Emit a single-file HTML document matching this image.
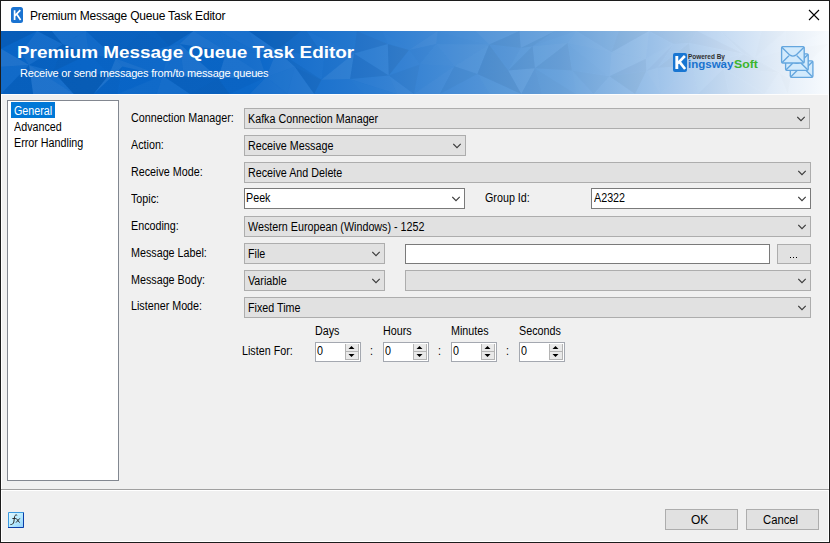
<!DOCTYPE html>
<html><head><meta charset="utf-8">
<style>
html,body{margin:0;padding:0;}
body{width:830px;height:543px;position:relative;overflow:hidden;background:#f0f0f0;font-family:"Liberation Sans",sans-serif;color:#000;}
.a{position:absolute;}
.t{position:absolute;white-space:nowrap;line-height:1;font-size:12px;transform:scaleX(0.895);transform-origin:0 0;}
.cb{position:absolute;box-sizing:border-box;border:1px solid #adadad;background:#e1e1e1;height:21px;}
.cbw{position:absolute;box-sizing:border-box;border:1px solid #7a7a7a;background:#fff;height:21px;}
.btn{position:absolute;box-sizing:border-box;border:1px solid #adadad;background:#e1e1e1;}
.nud{position:absolute;box-sizing:border-box;border:1px solid #a4a8b0;background:#fff;width:46px;height:20px;}
</style></head><body>
<div class="a" style="left:0;top:0;width:830px;height:543px;box-sizing:border-box;border:1px solid #1c1c1c;"></div>
<div class="a" style="left:1px;top:94px;width:1px;height:448px;background:#fff;"></div>
<div class="a" style="left:828px;top:94px;width:1px;height:448px;background:#fff;"></div>
<div class="a" style="left:1px;top:541px;width:828px;height:1px;background:#fff;"></div>
<div class="a" style="left:1px;top:1px;width:828px;height:30px;background:#fff;"></div>
<div class="a" style="left:11px;top:7px;width:12px;height:16px;background:#1a73d1;border-radius:2.5px;"></div>
<svg class="a" style="left:11px;top:7px;" width="12" height="16" viewBox="0 0 12 16"><path d="M3.6 3.2V12.9M4 8.6L9.3 3.2M5.6 7L9.6 12.9" stroke="#fff" stroke-width="1.7" fill="none"/></svg>
<div class="a" style="left:30px;top:10px;white-space:nowrap;line-height:1;font-size:12px;letter-spacing:-0.2px;">Premium Message Queue Task Editor</div>
<svg class="a" style="left:808px;top:9px;" width="12" height="12" viewBox="0 0 12 12"><path d="M1 1L11 11M11 1L1 11" stroke="#000" stroke-width="1.1"/></svg>
<div class="a" style="left:1px;top:31px;width:828px;height:63px;background:linear-gradient(90deg,#0864c6 0%,#0b67c9 30%,#2a7bd1 45%,#5596d8 60%,#6aa3dc 67.5%,#a0c4ea 79.5%,#c9ddf3 88%,#e3edf8 94%,#f8fbfe 100%);"></div>
<svg class="a" style="left:1px;top:31px;" width="828" height="63" viewBox="0 0 828 63"><path d="M0.0 0.0L36.1 0.0L0.0 17.8Z" fill="#000" fill-opacity="0.070"/><path d="M36.1 0.0L19.9 21.6L0.0 17.8Z" fill="#fff" fill-opacity="0.008"/><path d="M0.0 17.8L19.9 21.6L28.1 34.0Z" fill="#fff" fill-opacity="0.006"/><path d="M0.0 17.8L28.1 34.0L0.0 35.7Z" fill="#fff" fill-opacity="0.095"/><path d="M0.0 35.7L28.1 34.0L0.0 63.0Z" fill="#fff" fill-opacity="0.039"/><path d="M28.1 34.0L32.1 63.0L0.0 63.0Z" fill="#000" fill-opacity="0.047"/><path d="M36.1 0.0L50.7 0.0L61.8 13.3Z" fill="#000" fill-opacity="0.064"/><path d="M36.1 0.0L61.8 13.3L19.9 21.6Z" fill="#fff" fill-opacity="0.053"/><path d="M19.9 21.6L61.8 13.3L28.1 34.0Z" fill="#fff" fill-opacity="0.054"/><path d="M61.8 13.3L52.2 40.6L28.1 34.0Z" fill="#000" fill-opacity="0.033"/><path d="M28.1 34.0L52.2 40.6L72.8 63.0Z" fill="#fff" fill-opacity="0.060"/><path d="M28.1 34.0L72.8 63.0L32.1 63.0Z" fill="#fff" fill-opacity="0.093"/><path d="M50.7 0.0L85.0 0.0L61.8 13.3Z" fill="#fff" fill-opacity="0.058"/><path d="M85.0 0.0L87.8 23.3L61.8 13.3Z" fill="#fff" fill-opacity="0.059"/><path d="M61.8 13.3L87.8 23.3L52.2 40.6Z" fill="#000" fill-opacity="0.051"/><path d="M87.8 23.3L108.1 43.4L52.2 40.6Z" fill="#fff" fill-opacity="0.003"/><path d="M52.2 40.6L108.1 43.4L92.6 63.0Z" fill="#000" fill-opacity="0.087"/><path d="M52.2 40.6L92.6 63.0L72.8 63.0Z" fill="#000" fill-opacity="0.088"/><path d="M85.0 0.0L140.7 0.0L114.7 27.5Z" fill="#000" fill-opacity="0.043"/><path d="M85.0 0.0L114.7 27.5L87.8 23.3Z" fill="#fff" fill-opacity="0.035"/><path d="M87.8 23.3L114.7 27.5L108.1 43.4Z" fill="#000" fill-opacity="0.010"/><path d="M114.7 27.5L121.5 35.6L108.1 43.4Z" fill="#fff" fill-opacity="0.079"/><path d="M108.1 43.4L121.5 35.6L92.6 63.0Z" fill="#fff" fill-opacity="0.082"/><path d="M121.5 35.6L116.7 63.0L92.6 63.0Z" fill="#000" fill-opacity="0.024"/><path d="M140.7 0.0L153.9 0.0L168.1 15.3Z" fill="#000" fill-opacity="0.047"/><path d="M140.7 0.0L168.1 15.3L114.7 27.5Z" fill="#000" fill-opacity="0.053"/><path d="M114.7 27.5L168.1 15.3L161.5 44.5Z" fill="#fff" fill-opacity="0.022"/><path d="M114.7 27.5L161.5 44.5L121.5 35.6Z" fill="#fff" fill-opacity="0.071"/><path d="M121.5 35.6L161.5 44.5L116.7 63.0Z" fill="#000" fill-opacity="0.004"/><path d="M161.5 44.5L155.7 63.0L116.7 63.0Z" fill="#fff" fill-opacity="0.027"/><path d="M153.9 0.0L192.4 0.0L168.1 15.3Z" fill="#000" fill-opacity="0.070"/><path d="M192.4 0.0L178.8 13.1L168.1 15.3Z" fill="#fff" fill-opacity="0.027"/><path d="M168.1 15.3L178.8 13.1L161.5 44.5Z" fill="#fff" fill-opacity="0.048"/><path d="M178.8 13.1L182.8 45.2L161.5 44.5Z" fill="#fff" fill-opacity="0.042"/><path d="M161.5 44.5L182.8 45.2L189.0 63.0Z" fill="#000" fill-opacity="0.054"/><path d="M161.5 44.5L189.0 63.0L155.7 63.0Z" fill="#fff" fill-opacity="0.049"/><path d="M192.4 0.0L217.7 0.0L225.3 20.2Z" fill="#fff" fill-opacity="0.049"/><path d="M192.4 0.0L225.3 20.2L178.8 13.1Z" fill="#fff" fill-opacity="0.078"/><path d="M178.8 13.1L225.3 20.2L217.3 47.3Z" fill="#000" fill-opacity="0.016"/><path d="M178.8 13.1L217.3 47.3L182.8 45.2Z" fill="#fff" fill-opacity="0.074"/><path d="M182.8 45.2L217.3 47.3L189.0 63.0Z" fill="#000" fill-opacity="0.054"/><path d="M217.3 47.3L228.5 63.0L189.0 63.0Z" fill="#000" fill-opacity="0.061"/><path d="M217.7 0.0L247.6 0.0L256.9 21.5Z" fill="#fff" fill-opacity="0.063"/><path d="M217.7 0.0L256.9 21.5L225.3 20.2Z" fill="#fff" fill-opacity="0.048"/><path d="M225.3 20.2L256.9 21.5L265.3 46.1Z" fill="#fff" fill-opacity="0.051"/><path d="M225.3 20.2L265.3 46.1L217.3 47.3Z" fill="#fff" fill-opacity="0.076"/><path d="M217.3 47.3L265.3 46.1L228.5 63.0Z" fill="#000" fill-opacity="0.024"/><path d="M265.3 46.1L248.8 63.0L228.5 63.0Z" fill="#fff" fill-opacity="0.008"/><path d="M247.6 0.0L300.1 0.0L275.9 19.5Z" fill="#000" fill-opacity="0.073"/><path d="M247.6 0.0L275.9 19.5L256.9 21.5Z" fill="#fff" fill-opacity="0.072"/><path d="M256.9 21.5L275.9 19.5L265.3 46.1Z" fill="#fff" fill-opacity="0.004"/><path d="M275.9 19.5L293.8 35.7L265.3 46.1Z" fill="#fff" fill-opacity="0.065"/><path d="M265.3 46.1L293.8 35.7L286.3 63.0Z" fill="#fff" fill-opacity="0.055"/><path d="M265.3 46.1L286.3 63.0L248.8 63.0Z" fill="#fff" fill-opacity="0.050"/><path d="M300.1 0.0L305.6 0.0L323.2 25.8Z" fill="#000" fill-opacity="0.036"/><path d="M300.1 0.0L323.2 25.8L275.9 19.5Z" fill="#000" fill-opacity="0.030"/><path d="M275.9 19.5L323.2 25.8L320.5 48.8Z" fill="#fff" fill-opacity="0.012"/><path d="M275.9 19.5L320.5 48.8L293.8 35.7Z" fill="#000" fill-opacity="0.035"/><path d="M293.8 35.7L320.5 48.8L313.2 63.0Z" fill="#000" fill-opacity="0.053"/><path d="M293.8 35.7L313.2 63.0L286.3 63.0Z" fill="#fff" fill-opacity="0.060"/><path d="M305.6 0.0L355.8 0.0L353.0 22.4Z" fill="#000" fill-opacity="0.006"/><path d="M305.6 0.0L353.0 22.4L323.2 25.8Z" fill="#fff" fill-opacity="0.012"/><path d="M323.2 25.8L353.0 22.4L320.5 48.8Z" fill="#000" fill-opacity="0.011"/><path d="M353.0 22.4L349.1 48.1L320.5 48.8Z" fill="#fff" fill-opacity="0.057"/><path d="M320.5 48.8L349.1 48.1L313.2 63.0Z" fill="#fff" fill-opacity="0.004"/><path d="M349.1 48.1L362.8 63.0L313.2 63.0Z" fill="#fff" fill-opacity="0.003"/><path d="M355.8 0.0L381.4 0.0L386.8 13.1Z" fill="#000" fill-opacity="0.008"/><path d="M355.8 0.0L386.8 13.1L353.0 22.4Z" fill="#000" fill-opacity="0.042"/><path d="M353.0 22.4L386.8 13.1L387.8 44.6Z" fill="#fff" fill-opacity="0.039"/><path d="M353.0 22.4L387.8 44.6L349.1 48.1Z" fill="#000" fill-opacity="0.044"/><path d="M349.1 48.1L387.8 44.6L396.0 63.0Z" fill="#fff" fill-opacity="0.029"/><path d="M349.1 48.1L396.0 63.0L362.8 63.0Z" fill="#fff" fill-opacity="0.007"/><path d="M381.4 0.0L423.0 0.0L408.0 18.9Z" fill="#fff" fill-opacity="0.002"/><path d="M381.4 0.0L408.0 18.9L386.8 13.1Z" fill="#fff" fill-opacity="0.007"/><path d="M386.8 13.1L408.0 18.9L387.8 44.6Z" fill="#000" fill-opacity="0.050"/><path d="M408.0 18.9L418.7 33.4L387.8 44.6Z" fill="#fff" fill-opacity="0.007"/><path d="M387.8 44.6L418.7 33.4L412.9 63.0Z" fill="#000" fill-opacity="0.028"/><path d="M387.8 44.6L412.9 63.0L396.0 63.0Z" fill="#fff" fill-opacity="0.034"/><path d="M423.0 0.0L436.6 0.0L408.0 18.9Z" fill="#fff" fill-opacity="0.007"/><path d="M436.6 0.0L435.1 13.1L408.0 18.9Z" fill="#fff" fill-opacity="0.031"/><path d="M408.0 18.9L435.1 13.1L418.7 33.4Z" fill="#000" fill-opacity="0.007"/><path d="M435.1 13.1L453.4 35.3L418.7 33.4Z" fill="#fff" fill-opacity="0.013"/><path d="M418.7 33.4L453.4 35.3L412.9 63.0Z" fill="#fff" fill-opacity="0.001"/><path d="M453.4 35.3L438.8 63.0L412.9 63.0Z" fill="#fff" fill-opacity="0.023"/><path d="M436.6 0.0L474.6 0.0L488.1 13.5Z" fill="#fff" fill-opacity="0.004"/><path d="M436.6 0.0L488.1 13.5L435.1 13.1Z" fill="#000" fill-opacity="0.003"/><path d="M435.1 13.1L488.1 13.5L453.4 35.3Z" fill="#fff" fill-opacity="0.022"/><path d="M488.1 13.5L476.3 42.9L453.4 35.3Z" fill="#fff" fill-opacity="0.041"/><path d="M453.4 35.3L476.3 42.9L438.8 63.0Z" fill="#000" fill-opacity="0.027"/><path d="M476.3 42.9L488.4 63.0L438.8 63.0Z" fill="#fff" fill-opacity="0.007"/><path d="M474.6 0.0L518.5 0.0L488.1 13.5Z" fill="#fff" fill-opacity="0.036"/><path d="M518.5 0.0L519.7 17.0L488.1 13.5Z" fill="#000" fill-opacity="0.037"/><path d="M488.1 13.5L519.7 17.0L507.2 39.5Z" fill="#000" fill-opacity="0.006"/><path d="M488.1 13.5L507.2 39.5L476.3 42.9Z" fill="#000" fill-opacity="0.045"/><path d="M476.3 42.9L507.2 39.5L520.3 63.0Z" fill="#000" fill-opacity="0.044"/><path d="M476.3 42.9L520.3 63.0L488.4 63.0Z" fill="#fff" fill-opacity="0.018"/><path d="M518.5 0.0L554.2 0.0L519.7 17.0Z" fill="#fff" fill-opacity="0.038"/><path d="M554.2 0.0L531.6 15.2L519.7 17.0Z" fill="#000" fill-opacity="0.033"/><path d="M519.7 17.0L531.6 15.2L507.2 39.5Z" fill="#fff" fill-opacity="0.016"/><path d="M531.6 15.2L533.9 37.2L507.2 39.5Z" fill="#000" fill-opacity="0.035"/><path d="M507.2 39.5L533.9 37.2L520.3 63.0Z" fill="#fff" fill-opacity="0.046"/><path d="M533.9 37.2L541.0 63.0L520.3 63.0Z" fill="#000" fill-opacity="0.027"/><path d="M554.2 0.0L575.7 0.0L531.6 15.2Z" fill="#000" fill-opacity="0.009"/><path d="M575.7 0.0L566.6 12.1L531.6 15.2Z" fill="#000" fill-opacity="0.001"/><path d="M531.6 15.2L566.6 12.1L533.9 37.2Z" fill="#fff" fill-opacity="0.031"/><path d="M566.6 12.1L571.0 39.6L533.9 37.2Z" fill="#000" fill-opacity="0.031"/><path d="M533.9 37.2L571.0 39.6L575.1 63.0Z" fill="#fff" fill-opacity="0.001"/><path d="M533.9 37.2L575.1 63.0L541.0 63.0Z" fill="#000" fill-opacity="0.015"/><path d="M575.7 0.0L617.8 0.0L610.4 21.3Z" fill="#000" fill-opacity="0.014"/><path d="M575.7 0.0L610.4 21.3L566.6 12.1Z" fill="#fff" fill-opacity="0.019"/><path d="M566.6 12.1L610.4 21.3L608.4 45.2Z" fill="#fff" fill-opacity="0.004"/><path d="M566.6 12.1L608.4 45.2L571.0 39.6Z" fill="#000" fill-opacity="0.005"/><path d="M571.0 39.6L608.4 45.2L592.6 63.0Z" fill="#000" fill-opacity="0.014"/><path d="M571.0 39.6L592.6 63.0L575.1 63.0Z" fill="#fff" fill-opacity="0.011"/><path d="M617.8 0.0L648.1 0.0L610.4 21.3Z" fill="#000" fill-opacity="0.032"/><path d="M648.1 0.0L644.8 27.7L610.4 21.3Z" fill="#fff" fill-opacity="0.034"/><path d="M610.4 21.3L644.8 27.7L608.4 45.2Z" fill="#fff" fill-opacity="0.035"/><path d="M644.8 27.7L645.3 40.1L608.4 45.2Z" fill="#000" fill-opacity="0.028"/><path d="M608.4 45.2L645.3 40.1L634.1 63.0Z" fill="#000" fill-opacity="0.033"/><path d="M608.4 45.2L634.1 63.0L592.6 63.0Z" fill="#fff" fill-opacity="0.021"/><path d="M648.1 0.0L657.7 0.0L672.5 13.1Z" fill="#000" fill-opacity="0.024"/><path d="M648.1 0.0L672.5 13.1L644.8 27.7Z" fill="#000" fill-opacity="0.005"/><path d="M644.8 27.7L672.5 13.1L645.3 40.1Z" fill="#fff" fill-opacity="0.021"/><path d="M672.5 13.1L656.7 36.8L645.3 40.1Z" fill="#000" fill-opacity="0.016"/><path d="M645.3 40.1L656.7 36.8L659.3 63.0Z" fill="#fff" fill-opacity="0.027"/><path d="M645.3 40.1L659.3 63.0L634.1 63.0Z" fill="#fff" fill-opacity="0.005"/><path d="M657.7 0.0L696.1 0.0L672.5 13.1Z" fill="#000" fill-opacity="0.024"/><path d="M696.1 0.0L688.1 12.0L672.5 13.1Z" fill="#000" fill-opacity="0.025"/><path d="M672.5 13.1L688.1 12.0L656.7 36.8Z" fill="#000" fill-opacity="0.004"/><path d="M688.1 12.0L690.9 34.8L656.7 36.8Z" fill="#000" fill-opacity="0.025"/><path d="M656.7 36.8L690.9 34.8L659.3 63.0Z" fill="#fff" fill-opacity="0.008"/><path d="M690.9 34.8L696.8 63.0L659.3 63.0Z" fill="#fff" fill-opacity="0.017"/><path d="M696.1 0.0L719.2 0.0L742.9 23.1Z" fill="#fff" fill-opacity="0.016"/><path d="M696.1 0.0L742.9 23.1L688.1 12.0Z" fill="#000" fill-opacity="0.021"/><path d="M688.1 12.0L742.9 23.1L690.9 34.8Z" fill="#000" fill-opacity="0.002"/><path d="M742.9 23.1L722.6 37.5L690.9 34.8Z" fill="#000" fill-opacity="0.007"/><path d="M690.9 34.8L722.6 37.5L696.8 63.0Z" fill="#fff" fill-opacity="0.022"/><path d="M722.6 37.5L728.2 63.0L696.8 63.0Z" fill="#000" fill-opacity="0.011"/><path d="M719.2 0.0L760.5 0.0L753.7 27.3Z" fill="#fff" fill-opacity="0.001"/><path d="M719.2 0.0L753.7 27.3L742.9 23.1Z" fill="#000" fill-opacity="0.010"/><path d="M742.9 23.1L753.7 27.3L778.1 41.4Z" fill="#000" fill-opacity="0.011"/><path d="M742.9 23.1L778.1 41.4L722.6 37.5Z" fill="#000" fill-opacity="0.016"/><path d="M722.6 37.5L778.1 41.4L763.9 63.0Z" fill="#000" fill-opacity="0.006"/><path d="M722.6 37.5L763.9 63.0L728.2 63.0Z" fill="#000" fill-opacity="0.008"/><path d="M760.5 0.0L784.6 0.0L753.7 27.3Z" fill="#000" fill-opacity="0.006"/><path d="M784.6 0.0L785.0 18.2L753.7 27.3Z" fill="#fff" fill-opacity="0.000"/><path d="M753.7 27.3L785.0 18.2L789.6 47.9Z" fill="#000" fill-opacity="0.004"/><path d="M753.7 27.3L789.6 47.9L778.1 41.4Z" fill="#000" fill-opacity="0.013"/><path d="M778.1 41.4L789.6 47.9L786.7 63.0Z" fill="#000" fill-opacity="0.011"/><path d="M778.1 41.4L786.7 63.0L763.9 63.0Z" fill="#fff" fill-opacity="0.006"/><path d="M784.6 0.0L828.0 0.0L785.0 18.2Z" fill="#000" fill-opacity="0.005"/><path d="M828.0 0.0L828.0 12.4L785.0 18.2Z" fill="#000" fill-opacity="0.000"/><path d="M785.0 18.2L828.0 12.4L789.6 47.9Z" fill="#000" fill-opacity="0.006"/><path d="M828.0 12.4L828.0 50.1L789.6 47.9Z" fill="#fff" fill-opacity="0.002"/><path d="M789.6 47.9L828.0 50.1L828.0 63.0Z" fill="#000" fill-opacity="0.000"/><path d="M789.6 47.9L828.0 63.0L786.7 63.0Z" fill="#fff" fill-opacity="0.005"/></svg>
<div class="a" style="left:17px;top:44px;white-space:nowrap;line-height:1;font-size:17px;font-weight:bold;transform:scaleX(1.113);transform-origin:0 0;color:#fff;">Premium Message Queue Task Editor</div>
<div class="a" style="left:20px;top:68px;white-space:nowrap;line-height:1;font-size:11px;letter-spacing:-0.18px;color:#fff;">Receive or send messages from/to message queues</div>
<svg class="a" style="left:673px;top:53px;" width="14" height="19" viewBox="0 0 14 19"><rect x="0" y="0" width="14" height="19" rx="2" fill="#1976d2"/><path d="M3.8 3V16" stroke="#fff" stroke-width="2.9"/><path d="M4.6 10.4L11.9 3M6.3 8.6L12.1 16" stroke="#fff" stroke-width="2.7"/></svg>
<div class="a" style="left:688px;top:53px;white-space:nowrap;line-height:1;font-size:7px;font-weight:bold;transform:scaleX(0.92);transform-origin:0 0;color:#2e2e2e;">Powered By</div>
<div class="a" style="left:688px;top:59px;white-space:nowrap;line-height:1;font-size:11.5px;font-weight:bold;color:#1a73cf;">ingsway</div>
<div class="a" style="left:734px;top:59px;white-space:nowrap;line-height:1;font-size:11.5px;font-weight:bold;transform:scaleX(1.07);transform-origin:0 0;color:#3cb52c;">Soft</div>
<svg class="a" style="left:780px;top:45px;" width="36" height="34" viewBox="0 0 36 34"><g fill="#d2eafc" stroke="#64a6de" stroke-width="1.35"><rect x="10.3" y="15.9" width="22.6" height="16.4" rx="1.3"/><path d="M10.3 16.2L18.6 24.5Q21.6 26.3 24.6 24.5L32.9 16.2M10.6 32.0L17.6 25.1M32.6 32.0L25.6 25.1" fill="none"/><rect x="5.6" y="8.9" width="22.6" height="16.4" rx="1.3"/><path d="M5.6 9.2L13.9 17.5Q16.9 19.3 19.9 17.5L28.2 9.2M5.9 25.0L12.9 18.1M27.9 25.0L20.9 18.1" fill="none"/><rect x="1.6" y="1.6" width="22.6" height="16.4" rx="1.3"/><path d="M1.6 1.9L9.9 10.2Q12.9 12.0 15.9 10.2L24.2 1.9M1.9 17.7L8.9 10.8M23.9 17.7L16.9 10.8" fill="none"/></g></svg>
<div class="a" style="left:1px;top:94px;width:828px;height:1px;background:#fdfdfd;"></div>
<div class="a" style="left:7px;top:100px;width:112px;height:381px;box-sizing:border-box;border:1px solid #828790;background:#fff;"></div>
<div class="a" style="left:11px;top:102px;width:44px;height:16px;background:#0078d7;"></div>
<div class="t" style="left:14px;top:105px;color:#fff;">General</div>
<div class="t" style="left:14px;top:121px;">Advanced</div>
<div class="t" style="left:14px;top:137px;">Error Handling</div>
<div class="t" style="left:131px;top:112px;">Connection Manager:</div>
<div class="t" style="left:131px;top:139px;">Action:</div>
<div class="t" style="left:131px;top:166px;">Receive Mode:</div>
<div class="t" style="left:131px;top:193px;">Topic:</div>
<div class="t" style="left:131px;top:220px;">Encoding:</div>
<div class="t" style="left:131px;top:247px;">Message Label:</div>
<div class="t" style="left:131px;top:274px;">Message Body:</div>
<div class="t" style="left:131px;top:300px;">Listener Mode:</div>
<div class="t" style="left:485px;top:192px;">Group Id:</div>
<div class="cb" style="left:244px;top:108px;width:566px;"></div>
<div class="t" style="left:248px;top:113px;">Kafka Connection Manager</div>
<svg class="a" style="left:797px;top:116px;" width="9" height="6" viewBox="0 0 9 6"><path d="M0.3 0.9L4 4.7L7.7 0.9" stroke="#3a3a3a" stroke-width="1.1" fill="none"/></svg>
<div class="cb" style="left:244px;top:135px;width:222px;"></div>
<div class="t" style="left:248px;top:140px;">Receive Message</div>
<svg class="a" style="left:453px;top:143px;" width="9" height="6" viewBox="0 0 9 6"><path d="M0.3 0.9L4 4.7L7.7 0.9" stroke="#3a3a3a" stroke-width="1.1" fill="none"/></svg>
<div class="cb" style="left:244px;top:162px;width:567px;"></div>
<div class="t" style="left:248px;top:167px;">Receive And Delete</div>
<svg class="a" style="left:798px;top:170px;" width="9" height="6" viewBox="0 0 9 6"><path d="M0.3 0.9L4 4.7L7.7 0.9" stroke="#3a3a3a" stroke-width="1.1" fill="none"/></svg>
<div class="cbw" style="left:244px;top:188px;width:221px;"></div>
<div class="t" style="left:246px;top:192px;">Peek</div>
<svg class="a" style="left:452px;top:196px;" width="9" height="6" viewBox="0 0 9 6"><path d="M0.3 0.9L4 4.7L7.7 0.9" stroke="#3a3a3a" stroke-width="1.1" fill="none"/></svg>
<div class="cbw" style="left:591px;top:188px;width:220px;"></div>
<div class="t" style="left:594px;top:192px;">A2322</div>
<svg class="a" style="left:798px;top:196px;" width="9" height="6" viewBox="0 0 9 6"><path d="M0.3 0.9L4 4.7L7.7 0.9" stroke="#3a3a3a" stroke-width="1.1" fill="none"/></svg>
<div class="cb" style="left:244px;top:216px;width:567px;"></div>
<div class="t" style="left:248px;top:221px;">Western European (Windows) - 1252</div>
<svg class="a" style="left:798px;top:224px;" width="9" height="6" viewBox="0 0 9 6"><path d="M0.3 0.9L4 4.7L7.7 0.9" stroke="#3a3a3a" stroke-width="1.1" fill="none"/></svg>
<div class="cb" style="left:244px;top:243px;width:141px;"></div>
<div class="t" style="left:248px;top:248px;">File</div>
<svg class="a" style="left:372px;top:251px;" width="9" height="6" viewBox="0 0 9 6"><path d="M0.3 0.9L4 4.7L7.7 0.9" stroke="#3a3a3a" stroke-width="1.1" fill="none"/></svg>
<div class="cb" style="left:244px;top:270px;width:141px;"></div>
<div class="t" style="left:248px;top:275px;">Variable</div>
<svg class="a" style="left:372px;top:278px;" width="9" height="6" viewBox="0 0 9 6"><path d="M0.3 0.9L4 4.7L7.7 0.9" stroke="#3a3a3a" stroke-width="1.1" fill="none"/></svg>
<div class="cb" style="left:405px;top:270px;width:406px;"></div>
<svg class="a" style="left:798px;top:278px;" width="9" height="6" viewBox="0 0 9 6"><path d="M0.3 0.9L4 4.7L7.7 0.9" stroke="#3a3a3a" stroke-width="1.1" fill="none"/></svg>
<div class="cb" style="left:244px;top:297px;width:567px;"></div>
<div class="t" style="left:248px;top:302px;">Fixed Time</div>
<svg class="a" style="left:798px;top:305px;" width="9" height="6" viewBox="0 0 9 6"><path d="M0.3 0.9L4 4.7L7.7 0.9" stroke="#3a3a3a" stroke-width="1.1" fill="none"/></svg>
<div class="cbw" style="left:405px;top:244px;width:365px;height:20px;"></div>
<div class="btn" style="left:777px;top:244px;width:34px;height:20px;"></div>
<div class="a" style="left:790px;top:257px;width:1px;height:1px;background:#000;"></div><div class="a" style="left:793px;top:257px;width:1px;height:1px;background:#000;"></div><div class="a" style="left:796px;top:257px;width:1px;height:1px;background:#000;"></div>
<div class="t" style="left:315px;top:325px;">Days</div>
<div class="t" style="left:383px;top:325px;">Hours</div>
<div class="t" style="left:451px;top:325px;">Minutes</div>
<div class="t" style="left:519px;top:325px;">Seconds</div>
<div class="t" style="left:242px;top:345px;">Listen For:</div>
<div class="nud" style="left:315px;top:342px;"></div>
<div class="t" style="left:317px;top:345px;">0</div>
<svg class="a" style="left:345px;top:344px;" width="14" height="16" viewBox="0 0 14 16"><rect x="0" y="0" width="14" height="16" fill="#e9e9e9"/><path d="M0.5 0V16M13.5 0V16M0 15.5H14M0 7.5H14" stroke="#b4b4b4" stroke-width="1"/><path d="M3.5 5L9.5 5L6.5 2Z M3.5 10L9.5 10L6.5 13Z" fill="#000"/></svg>
<div class="t" style="left:370px;top:345px;">:</div>
<div class="nud" style="left:383px;top:342px;"></div>
<div class="t" style="left:385px;top:345px;">0</div>
<svg class="a" style="left:413px;top:344px;" width="14" height="16" viewBox="0 0 14 16"><rect x="0" y="0" width="14" height="16" fill="#e9e9e9"/><path d="M0.5 0V16M13.5 0V16M0 15.5H14M0 7.5H14" stroke="#b4b4b4" stroke-width="1"/><path d="M3.5 5L9.5 5L6.5 2Z M3.5 10L9.5 10L6.5 13Z" fill="#000"/></svg>
<div class="t" style="left:438px;top:345px;">:</div>
<div class="nud" style="left:451px;top:342px;"></div>
<div class="t" style="left:453px;top:345px;">0</div>
<svg class="a" style="left:481px;top:344px;" width="14" height="16" viewBox="0 0 14 16"><rect x="0" y="0" width="14" height="16" fill="#e9e9e9"/><path d="M0.5 0V16M13.5 0V16M0 15.5H14M0 7.5H14" stroke="#b4b4b4" stroke-width="1"/><path d="M3.5 5L9.5 5L6.5 2Z M3.5 10L9.5 10L6.5 13Z" fill="#000"/></svg>
<div class="t" style="left:506px;top:345px;">:</div>
<div class="nud" style="left:519px;top:342px;"></div>
<div class="t" style="left:521px;top:345px;">0</div>
<svg class="a" style="left:549px;top:344px;" width="14" height="16" viewBox="0 0 14 16"><rect x="0" y="0" width="14" height="16" fill="#e9e9e9"/><path d="M0.5 0V16M13.5 0V16M0 15.5H14M0 7.5H14" stroke="#b4b4b4" stroke-width="1"/><path d="M3.5 5L9.5 5L6.5 2Z M3.5 10L9.5 10L6.5 13Z" fill="#000"/></svg>
<div class="a" style="left:1px;top:489px;width:828px;height:1px;background:#a0a0a0;"></div>
<div class="a" style="left:1px;top:490px;width:828px;height:1px;background:#fff;"></div>
<svg class="a" style="left:8px;top:512px;" width="16" height="16" viewBox="0 0 16 16"><defs><linearGradient id="fxg" x1="0" y1="0" x2="1" y2="1"><stop offset="0" stop-color="#eafaff"/><stop offset="0.5" stop-color="#b9ecff"/><stop offset="1" stop-color="#8ccdfa"/></linearGradient></defs><rect x="0" y="0" width="16" height="16" fill="url(#fxg)"/><path d="M0.5 16V0.5H15.5" stroke="#3a9ae0" fill="none"/><path d="M15.5 0.5V15.5H0" stroke="#0b3ea8" fill="none"/><path d="M9.2 3.3C8.2 2.6 7 2.9 6.6 4.6L5.8 10C5.4 11.8 4.2 12.6 2.4 12.6M4.4 6.5H7.8M8.2 6.4L11.6 10.6M11.8 6.4L8 10.6" stroke="#2a2a2a" stroke-width="1" fill="none"/></svg>
<div class="btn" style="left:665px;top:509px;width:73px;height:21px;"></div>
<div class="t" style="left:691px;top:514px;transform:none;">OK</div>
<div class="btn" style="left:746px;top:509px;width:73px;height:21px;"></div>
<div class="t" style="left:763px;top:514px;transform:scaleX(0.94);">Cancel</div>
</body></html>
